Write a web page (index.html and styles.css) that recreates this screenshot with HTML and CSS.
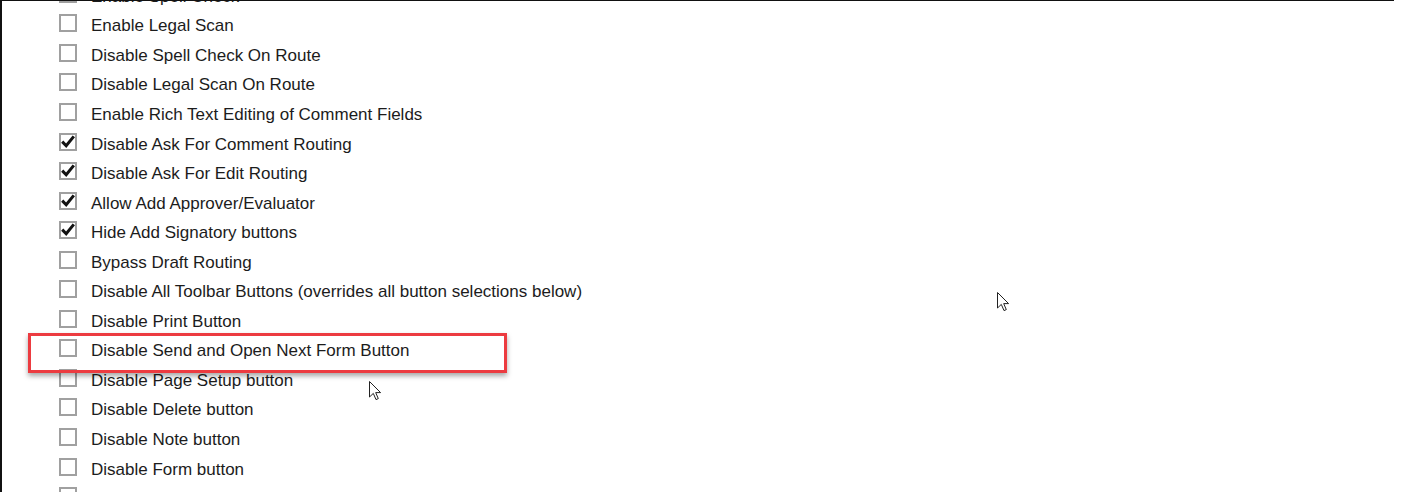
FILE: index.html
```html
<!DOCTYPE html>
<html>
<head>
<meta charset="utf-8">
<link rel="stylesheet" href="styles.css">
</head>
<body>
<div class="frame">
  <ul class="options">
    <li class="opt"><span class="box"></span><span class="label">Enable Spell Check</span></li>
    <li class="opt"><span class="box"></span><span class="label">Enable Legal Scan</span></li>
    <li class="opt"><span class="box"></span><span class="label">Disable Spell Check On Route</span></li>
    <li class="opt"><span class="box"></span><span class="label">Disable Legal Scan On Route</span></li>
    <li class="opt"><span class="box"></span><span class="label">Enable Rich Text Editing of Comment Fields</span></li>
    <li class="opt"><span class="box checked"><svg viewBox="0 0 18 18"><path d="M3.2 8.6 L7.2 12.8 L14.8 3.4"/></svg></span><span class="label">Disable Ask For Comment Routing</span></li>
    <li class="opt"><span class="box checked"><svg viewBox="0 0 18 18"><path d="M3.2 8.6 L7.2 12.8 L14.8 3.4"/></svg></span><span class="label">Disable Ask For Edit Routing</span></li>
    <li class="opt"><span class="box checked"><svg viewBox="0 0 18 18"><path d="M3.2 8.6 L7.2 12.8 L14.8 3.4"/></svg></span><span class="label">Allow Add Approver/Evaluator</span></li>
    <li class="opt"><span class="box checked"><svg viewBox="0 0 18 18"><path d="M3.2 8.6 L7.2 12.8 L14.8 3.4"/></svg></span><span class="label">Hide Add Signatory buttons</span></li>
    <li class="opt"><span class="box"></span><span class="label">Bypass Draft Routing</span></li>
    <li class="opt"><span class="box"></span><span class="label">Disable All Toolbar Buttons (overrides all button selections below)</span></li>
    <li class="opt"><span class="box"></span><span class="label">Disable Print Button</span></li>
    <li class="opt"><span class="box"></span><span class="label">Disable Send and Open Next Form Button</span></li>
    <li class="opt"><span class="box"></span><span class="label">Disable Page Setup button</span></li>
    <li class="opt"><span class="box"></span><span class="label">Disable Delete button</span></li>
    <li class="opt"><span class="box"></span><span class="label">Disable Note button</span></li>
    <li class="opt"><span class="box"></span><span class="label">Disable Form button</span></li>
    <li class="opt"><span class="box"></span><span class="label">Disable OCR button</span></li>
  </ul>
  <div class="highlight"></div>
  <svg class="cursor cursor-a" viewBox="0 0 13 20"><path d="M0.5 0.5 L0.5 16 L4.3 12.4 L7 18.6 L9.3 17.6 L6.7 11.6 L11.6 11.6 Z"/></svg>
  <svg class="cursor cursor-b" viewBox="0 0 13 20"><path d="M0.5 0.5 L0.5 16 L4.3 12.4 L7 18.6 L9.3 17.6 L6.7 11.6 L11.6 11.6 Z"/></svg>
</div>
</body>
</html>
```
FILE: styles.css
```css
html, body {
  margin: 0;
  padding: 0;
  background: #fff;
  overflow: hidden;
}
.frame {
  position: relative;
  width: 1392px;
  height: 491px;
  border-top: 1px solid #111;
  border-left: 2px solid #111;
  overflow: hidden;
  font-family: "Liberation Sans", Arial, sans-serif;
}
.options {
  list-style: none;
  margin: -19px 0 0 0;
  padding: 0 0 0 57px;
}
.opt {
  display: flex;
  align-items: center;
  height: 29.55px;
}
.box {
  box-sizing: border-box;
  width: 18px;
  height: 18px;
  border: 2px solid #a0a0a0;
  background: #fff;
  margin-right: 14px;
  margin-bottom: 6px;
  flex: none;
  display: flex;
}
.box svg {
  width: 18px;
  height: 18px;
  margin: -2px;
}
.box svg path {
  fill: none;
  stroke: #111;
  stroke-width: 3;
}
.label {
  font-size: 17px;
  color: #1c1c1c;
  white-space: nowrap;
}
.highlight {
  position: absolute;
  left: 26px;
  top: 332px;
  width: 479px;
  height: 40px;
  box-sizing: border-box;
  border: 3px solid #ec3b40;
  box-shadow: 0 3px 5px rgba(0, 0, 0, 0.35);
}
.cursor {
  position: absolute;
  width: 13px;
  height: 20px;
}
.cursor path {
  fill: #fff;
  stroke: #222;
  stroke-width: 1;
  stroke-linejoin: miter;
}
.cursor-a {
  left: 995px;
  top: 291px;
}
.cursor-b {
  left: 367px;
  top: 380px;
}
```
